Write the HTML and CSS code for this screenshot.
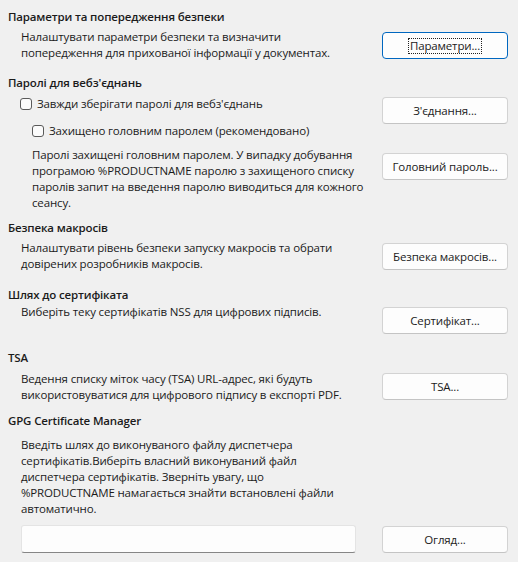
FILE: index.html
```html
<!DOCTYPE html>
<html lang="uk">
<head>
<meta charset="utf-8">
<link rel="stylesheet" href="styles.css">
</head>
<body>
<div class="page">
  <div class="h h1">Параметри та попередження безпеки</div>
  <div class="row r1">
    <div class="desc">Налаштувати параметри безпеки та визначити<br>попередження для прихованої інформації у документах.</div>
    <div class="col"><button class="btn focus b1"><span class="fr">Параметри...</span></button></div>
  </div>

  <div class="h h2">Паролі для вебз'єднань</div>
  <div class="row r2">
    <div class="left">
      <label class="cb cb1"><span class="box"></span>Завжди зберігати паролі для вебз'єднань</label>
      <label class="cb cb2"><span class="box"></span>Захищено головним паролем (рекомендовано)</label>
      <div class="desc d3">Паролі захищені головним паролем. У випадку добування<br>програмою %PRODUCTNAME паролю з захищеного списку<br>паролів запит на введення паролю виводиться для кожного<br>сеансу.</div>
    </div>
    <div class="col">
      <button class="btn b2">З'єднання...</button>
      <button class="btn b3">Головний пароль...</button>
    </div>
  </div>

  <div class="h h3">Безпека макросів</div>
  <div class="row r4">
    <div class="desc">Налаштувати рівень безпеки запуску макросів та обрати<br>довірених розробників макросів.</div>
    <div class="col"><button class="btn b4">Безпека макросів...</button></div>
  </div>

  <div class="h h4">Шлях до сертифіката</div>
  <div class="row r5">
    <div class="desc">Виберіть теку сертифікатів NSS для цифрових підписів.</div>
    <div class="col"><button class="btn b5">Сертифікат...</button></div>
  </div>

  <div class="h h5">TSA</div>
  <div class="row r6">
    <div class="desc">Ведення списку міток часу (TSA) URL-адрес, які будуть<br>використовуватися для цифрового підпису в експорті PDF.</div>
    <div class="col"><button class="btn b6">TSA...</button></div>
  </div>

  <div class="h h6">GPG Certificate Manager</div>
  <div class="desc d7">Введіть шлях до виконуваного файлу диспетчера<br>сертифікатів.Виберіть власний виконуваний файл<br>диспетчера сертифікатів. Зверніть увагу, що<br>%PRODUCTNAME намагається знайти встановлені файли<br>автоматично.</div>
  <div class="row r7">
    <div class="input"></div>
    <div class="col"><button class="btn b7">Огляд...</button></div>
  </div>
</div>
</body>
</html>
```

FILE: styles.css
```css
html, body {
  margin: 0;
  padding: 0;
  background: #f0f0f0;
}
body {
  width: 518px;
  height: 562px;
  overflow: hidden;
  font-family: "Open Sans", "Noto Sans", sans-serif;
  font-size: 11.5px;
  letter-spacing: -0.15px;
  line-height: 16px;
  color: #1b1b1b;
}
.page {
  padding: 9px 10px 0 8px;
}
.h {
  font-weight: 600;
  height: 16px;
  white-space: nowrap;
}
.row {
  display: flex;
  justify-content: space-between;
  align-items: flex-start;
}
.desc {
  padding-left: 13px;
  white-space: nowrap;
}
.left {
  flex: 1 1 auto;
  min-width: 0;
  display: flex;
  flex-direction: column;
}
.col {
  flex: 0 0 126px;
  width: 126px;
  display: flex;
  flex-direction: column;
}
.btn {
  box-sizing: border-box;
  width: 126px;
  height: 27px;
  border: 1px solid #d3d3d3;
  border-bottom-color: #c4c4c4;
  border-radius: 4px;
  background: #fdfdfd;
  font: inherit;
  letter-spacing: inherit;
  color: #1b1b1b;
  padding: 0;
  display: flex;
  align-items: center;
  justify-content: center;
}
.btn.focus {
  border-color: #0067c0;
}
.fr {
  outline: 1px dotted #222;
  outline-offset: 0;
  padding: 0 1px;
  line-height: 14px;
}
.r1 { margin-top: 4px; }
.r1 .col { margin-top: 3px; }
.h2 { margin-top: 14px; }
.r2 { margin-top: 5px; }
.cb {
  display: flex;
  align-items: center;
  white-space: nowrap;
  height: 16px;
}
.box {
  box-sizing: border-box;
  flex: 0 0 12px;
  width: 12px;
  height: 12px;
  border: 1px solid #5a5a5a;
  border-radius: 3px;
  background: #fbfbfb;
  margin-right: 5px;
}
.cb1 { padding-left: 12px; }
.cb2 { padding-left: 24px; margin-top: 11px; }
.d3 { padding-left: 24px; margin-top: 8px; }
.b2 { margin-top: 1px; }
.b3 { margin-top: 29px; }
.h3 { margin-top: 9px; }
.r4 { margin-top: 4px; }
.r4 .col { margin-top: 3px; }
.h4 { margin-top: 15px; }
.r5 { margin-top: 1px; }
.r5 .col { margin-top: 3px; }
.h5 { margin-top: 16px; }
.r6 { margin-top: 5px; }
.r6 .col { margin-top: 2px; }
.h6 { margin-top: 10px; }
.d7 { margin-top: 8px; }
.r7 { margin-top: 8px; }
.r7 .col { margin-top: 1px; }
.input {
  box-sizing: border-box;
  margin-left: 13px;
  width: 335px;
  height: 28px;
  background: #fdfdfd;
  border: 1px solid #e4e4e4;
  border-bottom-color: #868686;
  border-radius: 3px;
}
```
